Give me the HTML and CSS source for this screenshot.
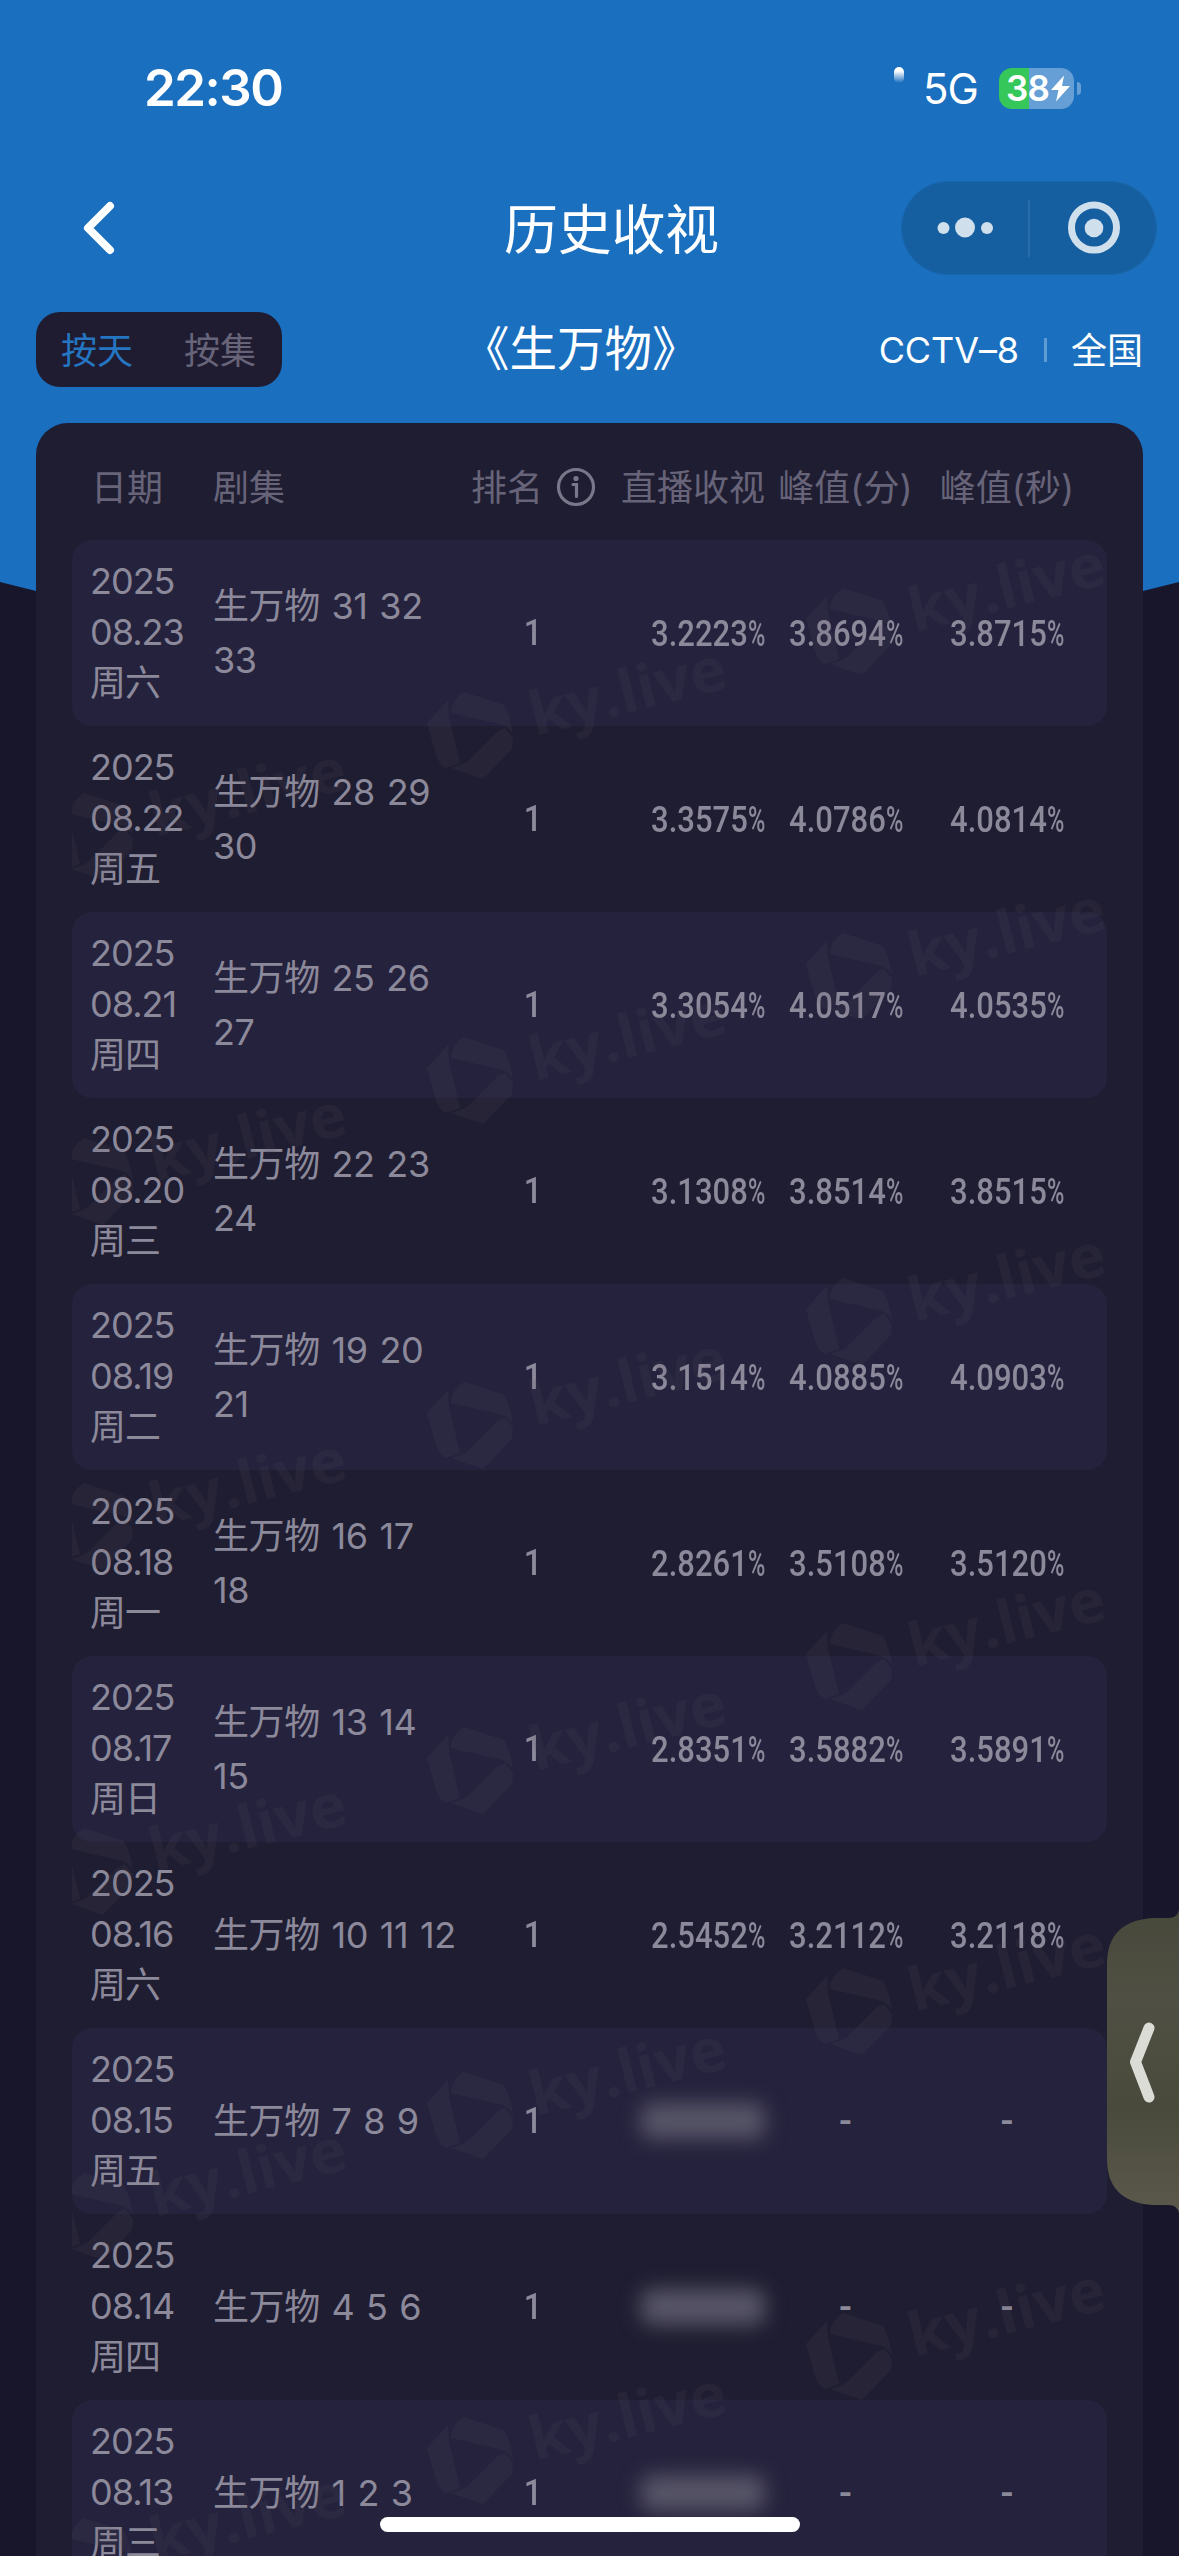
FILE: index.html
```html
<!DOCTYPE html>
<html lang="zh-CN">
<head>
<meta charset="utf-8">
<title>历史收视</title>
<link rel="stylesheet" href="styles.css">
</head>
<body>
<div class="page">
  <div class="backdrop"></div>

  <header class="status">
    <span class="time">22:30</span>
    <div class="status-right">
      <span class="signal"></span>
      <span class="net">5G</span>
      <span class="battery"><span class="level">38</span><svg class="bolt" viewBox="0 0 19 26"><path d="M13 0 0 14.500h7.500L5 26 19 10.500h-8z"/></svg></span>
      <span class="battery-tip"></span>
    </div>
  </header>

  <nav class="nav">
    <svg class="back" viewBox="0 0 34 56"><path d="M28 6 6 28l22 22"/></svg>
    <h1 class="title">历史收视</h1>
    <div class="capsule">
      <svg viewBox="0 0 256 94">
        <g class="ink"><circle cx="42.500" cy="47" r="6"/><circle cx="64" cy="46.500" r="10"/><circle cx="86" cy="47" r="6"/></g>
        <path class="split" d="M128 19v57"/>
        <circle class="ring" cx="193" cy="46.500" r="22.500"/>
        <circle class="ink" cx="193" cy="47" r="9.300"/>
      </svg>
    </div>
  </nav>

  <section class="filters">
    <div class="toggle"><span class="on">按天</span><span>按集</span></div>
    <h2 class="drama">《生万物》</h2>
    <div class="channel"><span class="station">CCTV–8</span><i class="bar"></i><span class="region">全国</span></div>
  </section>

  <main class="card">
    <div class="row head">
      <span class="head-date">日期</span><span>剧集</span>
      <span class="head-rank">排名<svg viewBox="0 0 40 40"><circle class="o" cx="20" cy="20" r="17.500"/><circle class="d" cx="20" cy="11.500" r="2.600"/><path class="o" d="M17 17.500h3.500V29.500"/></svg></span>
      <span class="live">直播收视</span><span class="mid">峰值(分)</span><span class="mid">峰值(秒)</span>
    </div>
    <div class="table">
      <div class="row"><div class="date">2025<br>08.23<br>周六</div><div class="ep">生万物 31 32<br>33</div><div class="rank">1</div><div class="live"><span class="num">3.2223<i>%</i></span></div><div class="mid"><span class="num">3.8694<i>%</i></span></div><div class="mid"><span class="num">3.8715<i>%</i></span></div></div>
      <div class="row"><div class="date">2025<br>08.22<br>周五</div><div class="ep">生万物 28 29<br>30</div><div class="rank">1</div><div class="live"><span class="num">3.3575<i>%</i></span></div><div class="mid"><span class="num">4.0786<i>%</i></span></div><div class="mid"><span class="num">4.0814<i>%</i></span></div></div>
      <div class="row"><div class="date">2025<br>08.21<br>周四</div><div class="ep">生万物 25 26<br>27</div><div class="rank">1</div><div class="live"><span class="num">3.3054<i>%</i></span></div><div class="mid"><span class="num">4.0517<i>%</i></span></div><div class="mid"><span class="num">4.0535<i>%</i></span></div></div>
      <div class="row"><div class="date">2025<br>08.20<br>周三</div><div class="ep">生万物 22 23<br>24</div><div class="rank">1</div><div class="live"><span class="num">3.1308<i>%</i></span></div><div class="mid"><span class="num">3.8514<i>%</i></span></div><div class="mid"><span class="num">3.8515<i>%</i></span></div></div>
      <div class="row"><div class="date">2025<br>08.19<br>周二</div><div class="ep">生万物 19 20<br>21</div><div class="rank">1</div><div class="live"><span class="num">3.1514<i>%</i></span></div><div class="mid"><span class="num">4.0885<i>%</i></span></div><div class="mid"><span class="num">4.0903<i>%</i></span></div></div>
      <div class="row"><div class="date">2025<br>08.18<br>周一</div><div class="ep">生万物 16 17<br>18</div><div class="rank">1</div><div class="live"><span class="num">2.8261<i>%</i></span></div><div class="mid"><span class="num">3.5108<i>%</i></span></div><div class="mid"><span class="num">3.5120<i>%</i></span></div></div>
      <div class="row"><div class="date">2025<br>08.17<br>周日</div><div class="ep">生万物 13 14<br>15</div><div class="rank">1</div><div class="live"><span class="num">2.8351<i>%</i></span></div><div class="mid"><span class="num">3.5882<i>%</i></span></div><div class="mid"><span class="num">3.5891<i>%</i></span></div></div>
      <div class="row"><div class="date">2025<br>08.16<br>周六</div><div class="ep">生万物 10 11 12</div><div class="rank">1</div><div class="live"><span class="num">2.5452<i>%</i></span></div><div class="mid"><span class="num">3.2112<i>%</i></span></div><div class="mid"><span class="num">3.2118<i>%</i></span></div></div>
      <div class="row"><div class="date">2025<br>08.15<br>周五</div><div class="ep">生万物 7 8 9</div><div class="rank">1</div><div class="live"><span class="masked"></span></div><div class="mid dash">-</div><div class="mid dash">-</div></div>
      <div class="row"><div class="date">2025<br>08.14<br>周四</div><div class="ep">生万物 4 5 6</div><div class="rank">1</div><div class="live"><span class="masked"></span></div><div class="mid dash">-</div><div class="mid dash">-</div></div>
      <div class="row"><div class="date">2025<br>08.13<br>周三</div><div class="ep">生万物 1 2 3</div><div class="rank">1</div><div class="live"><span class="masked"></span></div><div class="mid dash">-</div><div class="mid dash">-</div></div>
      <svg class="watermark" viewBox="0 0 1035 2016">
        <defs>
          <g id="mark">
            <path d="M37 0 77 13Q84 26 86 42 82 36 76 33L24 21Q24 8 37 0z"/>
            <path d="M21 8 0 31 9 63Q13 74 19 76L33 71 22 25z"/>
            <path d="M71 39 78 36 86 46 85 57 56 87 24 76 36 72 41 69z"/>
            <text transform="translate(108 44) rotate(-14)" textLength="201" lengthAdjust="spacingAndGlyphs">ky.live</text>
          </g>
        </defs>
        <use href="#mark" x="734" y="48"/><use href="#mark" x="734" y="393"/><use href="#mark" x="734" y="738"/><use href="#mark" x="734" y="1083"/><use href="#mark" x="734" y="1428"/><use href="#mark" x="734" y="1773"/>
        <use href="#mark" x="355" y="152"/><use href="#mark" x="355" y="497"/><use href="#mark" x="355" y="842"/><use href="#mark" x="355" y="1187"/><use href="#mark" x="355" y="1532"/><use href="#mark" x="355" y="1877"/>
        <use href="#mark" x="-25" y="253"/><use href="#mark" x="-25" y="598"/><use href="#mark" x="-25" y="943"/><use href="#mark" x="-25" y="1288"/><use href="#mark" x="-25" y="1633"/><use href="#mark" x="-25" y="1978"/>
      </svg>
    </div>
  </main>

  <svg class="drawer" viewBox="0 0 72 303">
    <defs><linearGradient id="olive" x1="0" y1="0" x2="0" y2="1"><stop offset="0" stop-color="#47493b"/><stop offset=".3" stop-color="#504f43"/><stop offset=".65" stop-color="#494a3c"/><stop offset="1" stop-color="#5c594c"/></linearGradient></defs>
    <path fill="url(#olive)" d="M72 0Q70 8 62 8H46Q0 11 0 54V249Q0 292 46 295H62Q70 295 72 303z"/>
    <path class="arrow" d="M42 118 28.500 152 42 187"/>
  </svg>
  <div class="home"></div>
</div>
</body>
</html>
```
FILE: styles.css
```css
* { box-sizing: border-box; }

body {
  margin: 0;
  background: #18162a;
  font-family: Inter, "Noto Sans CJK SC", sans-serif;
  font-size: 36px;
  color: #fff;
}

h1, h2 { margin: 0; font-weight: 400; }

.page {
  position: relative;
  width: 1179px;
  height: 2556px;
  overflow: hidden;
  display: flex;
  flex-direction: column;
}

.backdrop {
  position: absolute;
  z-index: -1;
  inset: 0 0 auto;
  height: 660px;
  background: #1a6fbf;
  clip-path: polygon(0 0, 100% 0, 100% 582px, 1143px 591px, 50% 660px, 36px 591px, 0 582px);
}

/* status bar */
.status {
  height: 181px;
  padding: 58px 98px 0 144px;
  display: flex;
  justify-content: space-between;
}
.time { font-size: 51px; font-weight: 600; line-height: 60px; letter-spacing: -1.5px; }
.status-right { display: flex; align-items: center; height: 60px; }
.signal {
  width: 10px;
  height: 16px;
  margin: -26px 26px 0 0;
  border-radius: 5px;
  background: linear-gradient(#fff 25%, rgba(255, 255, 255, 0));
}
.net { width: 71px; margin-left: -7px; padding-top: 2px; font-size: 42px; line-height: 50px; letter-spacing: -1px; white-space: nowrap; }
.battery {
  display: flex;
  align-items: center;
  width: 75px;
  height: 41px;
  margin-left: 5px;
  padding-left: 7px;
  border-radius: 13px;
  background: linear-gradient(90deg, #35c759 30px, #659fd5 30px);
}
.level { width: 45px; font-size: 35px; font-weight: 600; line-height: 41px; letter-spacing: -0.8px; }
.bolt { width: 19px; height: 27px; fill: #fff; flex: none; }
.battery-tip { width: 4px; height: 13px; margin-left: 3px; border-radius: 0 5px 5px 0; background: #659fd5; }

/* navigation */
.nav {
  height: 94px;
  padding: 0 22px 0 82px;
  display: flex;
  align-items: center;
}
.back { width: 34px; height: 56px; fill: none; stroke: #fff; stroke-width: 8; stroke-linecap: round; stroke-linejoin: round; }
.title { margin-left: 388px; padding-top: 5px; font-size: 54px; line-height: 72px; letter-spacing: -0.3px; white-space: nowrap; }
.capsule { width: 256px; height: 94px; margin-left: auto; border-radius: 47px; background: #155fa1; border: 1px solid #1a66aa; }
.capsule svg { display: block; width: 256px; height: 94px; margin: -1px; }
.ink { fill: #d0dfec; }
.ring { fill: none; stroke: #d0dfec; stroke-width: 7; }
.split { stroke: #2f72ad; stroke-width: 1.5; }

/* filters */
.filters {
  display: grid;
  grid-template-columns: 426px 240px 1fr;
  align-items: center;
  height: 75px;
  margin: 37px 36px 36px 36px;
}
.toggle {
  display: flex;
  align-items: center;
  gap: 51px;
  width: 246px;
  height: 75px;
  padding: 0 0 4px 25px;
  border-radius: 24px;
  background: #1f1c31;
  color: #676479;
}
.toggle .on { color: #2576c2; }
.drama { font-size: 47.5px; line-height: 72px; padding-bottom: 2px; white-space: nowrap; }
.channel { display: flex; align-items: center; justify-content: flex-end; }
.station { letter-spacing: -0.1px; }
.region { padding-bottom: 4px; }
.bar { width: 3px; height: 24px; margin: 0 24px 0 25px; background: #5f9bd3; }

/* ratings card */
.card {
  flex: 1;
  width: 1107px;
  margin-left: 36px;
  padding: 0 36px;
  border-radius: 32px 32px 0 0;
  background: #1f1d31;
  color: #8c899b;
}
.row {
  display: grid;
  grid-template-columns: 123px 260px 118px 174px 161px 162px;
  align-items: center;
  height: 186px;
  padding-left: 18px;
  border-radius: 20px;
  white-space: nowrap;
}
.head { height: 117px; padding-top: 7px; color: #676479; }
.head-date { padding-left: 1px; }
.head-rank { display: flex; align-items: center; margin-left: -2px; }
.head-rank svg { width: 40px; height: 40px; margin: 3px 0 0 13px; flex: none; }
.o { fill: none; stroke: #7a778a; stroke-width: 3.2; stroke-linecap: round; }
.d { fill: #7a778a; }

.table { position: relative; height: 2016px; overflow: hidden; }
.table .row:nth-child(odd) { background: #25223d; }
.date { line-height: 51px; letter-spacing: -1px; margin-top: -1px; }
.ep { line-height: 54px; letter-spacing: -0.4px; word-spacing: 2px; }
.rank { padding-left: 2px; text-align: center; font: 500 36px/51px Roboto, sans-serif; transform: scaleX(0.9); }
.live { justify-self: end; }
.mid { justify-self: center; }
.num {
  display: block;
  width: 114px;
  font: 500 36.5px/51px Roboto, sans-serif;
  transform: scaleX(0.85);
  transform-origin: left;
}
.num i { display: inline-block; font-style: normal; font-weight: 500; transform: scaleX(0.76); transform-origin: left; }
.dash { font: 500 38px/51px Roboto, sans-serif; }
.masked { display: block; width: 124px; height: 36px; border-radius: 10px; background: #575567; filter: blur(10px); }

.watermark {
  position: absolute;
  inset: 0;
  width: 1035px;
  height: 2016px;
  pointer-events: none;
  fill: #5c5860;
  opacity: 0.12;
}
.watermark text { font: 700 60px "Open Sans", sans-serif; }

/* overlays */
.drawer { position: absolute; right: 0; top: 1910px; width: 72px; height: 303px; }
.arrow { fill: none; stroke: #dbdcd5; stroke-width: 11; stroke-linecap: round; stroke-linejoin: round; }
.home { position: absolute; left: 380px; top: 2517px; width: 420px; height: 15px; border-radius: 8px; background: #fff; }
```
